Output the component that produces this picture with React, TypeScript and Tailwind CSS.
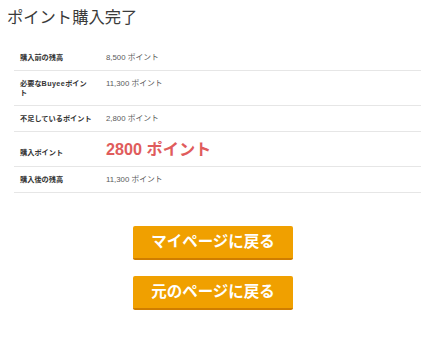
import React from "react";

const font = { fontFamily: '"Liberation Sans", "Noto Sans CJK JP", sans-serif' };

type Row = { label: React.ReactNode; value: React.ReactNode; h: string; labelCls?: string; valueCls?: string };

export default function App() {
  const rows: Row[] = [
    { label: "購入前の残高", value: "8,500 ポイント", h: "h-[26px]" },
    {
      label: (
        <>
          必要な<span className="tracking-[0.4px]">Buyee</span>ポイン
          <br />ト
        </>
      ),
      value: "11,300 ポイント",
      h: "h-[35px]",
      valueCls: "self-start pt-[8px]",
    },
    { label: "不足しているポイント", value: "2,800 ポイント", h: "h-[26px]" },
    {
      label: "購入ポイント",
      value: (
        <span className="text-[16.2px] font-bold leading-none text-[#e05c5c]">2800 ポイント</span>
      ),
      h: "h-[35px]",
      labelCls: "mt-[6px]",
    },
    { label: "購入後の残高", value: "11,300 ポイント", h: "h-[26px]" },
  ];
  return (
    <div className="w-[436px] h-[345px] bg-white overflow-hidden" style={font}>
      <h1 className="pl-[7px] pt-[5px] h-[45px] text-[16.3px] leading-[24px] font-normal text-[#3a3a3a]">
        ポイント購入完了
      </h1>
      <div className="ml-[14px] w-[407px] flex flex-col">
        {rows.map((r, i) => (
          <div key={i} className={`flex items-center border-b border-[#e6e6e6] ${r.h}`}>
            <div
              className={`w-[86px] shrink-0 pl-[6px] pr-[6px] text-[7.2px] leading-[9px] font-bold text-[#333] ${r.labelCls ?? ""}`}
            >
              {r.label}
            </div>
            <div className={`flex-1 pl-[6px] text-[7.8px] leading-[9px] text-[#5a5a5a] ${r.valueCls ?? ""}`}>
              {r.value}
            </div>
          </div>
        ))}
      </div>
      <div className="flex flex-col items-center pr-[10px] pt-[33px] gap-[16px]">
        <button className="w-[160px] h-[34px] bg-[#f0a000] border-b-2 border-[#cf7d00] rounded-[2px] text-white font-bold text-[15.5px] leading-none flex items-center justify-center">
          マイページに戻る
        </button>
        <button className="w-[160px] h-[34px] bg-[#f0a000] border-b-2 border-[#cf7d00] rounded-[2px] text-white font-bold text-[15.5px] leading-none flex items-center justify-center">
          元のページに戻る
        </button>
      </div>
    </div>
  );
}
